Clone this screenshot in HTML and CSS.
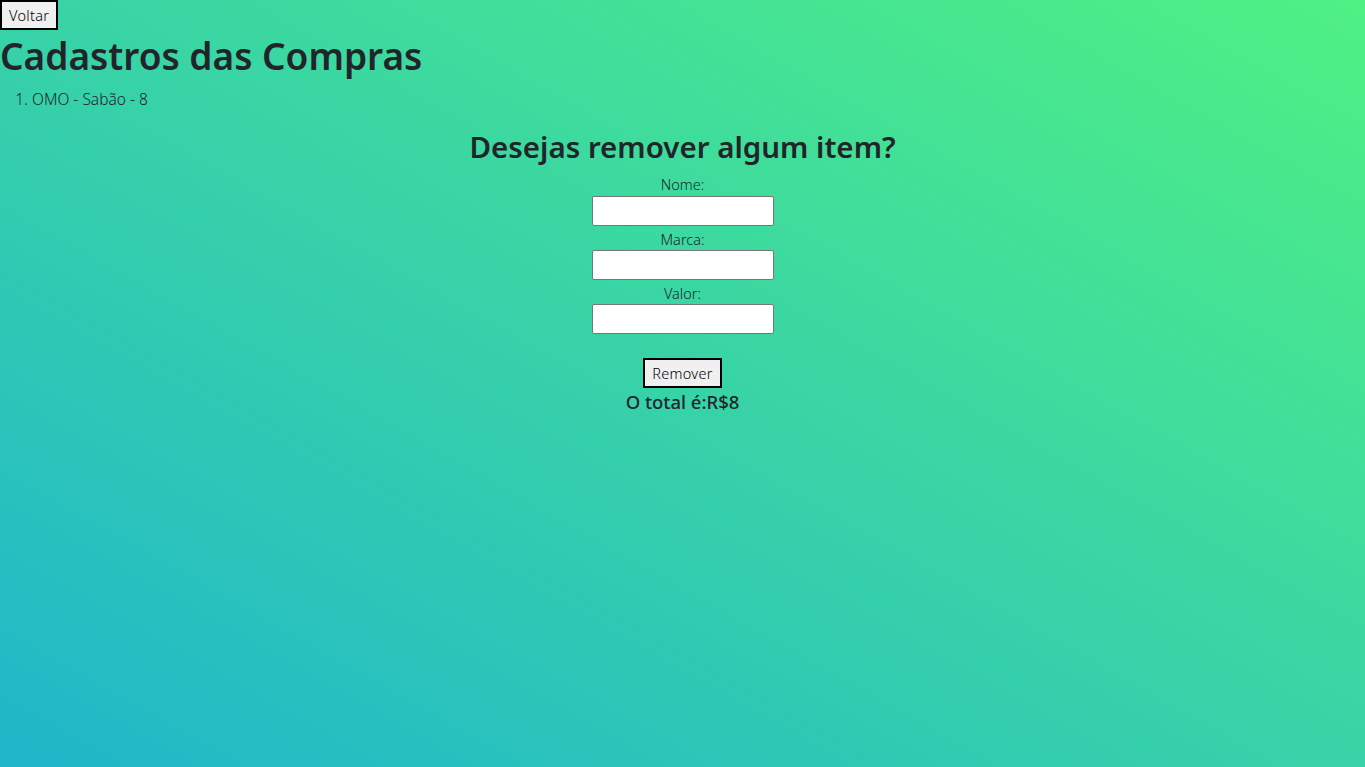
FILE: index.html
```html
<!DOCTYPE html>
<html lang="pt-BR">
<head>
<meta charset="utf-8">
<title>Cadastros das Compras</title>
<link rel="stylesheet" href="styles.css">
</head>
<body>
<button class="btn back">Voltar</button>
<h1 class="title">Cadastros das Compras</h1>
<ol class="list">
  <li>OMO - Sabão - 8</li>
</ol>
<section class="remove">
  <h2 class="subtitle">Desejas remover algum item?</h2>
  <form class="form">
    <label class="label" for="nome">Nome:</label>
    <input class="field" id="nome" type="text">
    <label class="label" for="marca">Marca:</label>
    <input class="field" id="marca" type="text">
    <label class="label" for="valor">Valor:</label>
    <input class="field" id="valor" type="text">
    <button class="btn submit" type="button">Remover</button>
  </form>
  <p class="total">O total é:R$8</p>
</section>
</body>
</html>
```
FILE: styles.css
```css
html, body {
  height: 100%;
}
body {
  margin: 0;
  font-family: "Noto Sans", "Open Sans", sans-serif;
  color: #212529;
  background: linear-gradient(to top right, #20b6ca, #4ff083);
  min-height: 767px;
}
.btn {
  font-family: "Noto Sans", sans-serif;
  font-size: 14.5px;
  font-weight: 300;
  color: #000;
  background: #f0f0f0;
  border: 2px solid #000;
  padding: 0 7px 0 7px;
  height: 30px;
  display: block;
  letter-spacing: 0.3px;
}
.back {
  margin: 0;
}
.title {
  margin: 4px 0 0 0;
  font-size: 37px;
  font-weight: 600;
  line-height: 44px;
}
.list {
  margin: 10px 0 0 0;
  padding-left: 32px;
  font-size: 15.5px;
  font-weight: 300;
  line-height: 22px;
}
.remove {
  display: flex;
  flex-direction: column;
  align-items: center;
}
.subtitle {
  margin: 17px 0 4px 0;
  font-size: 29.5px;
  font-weight: 600;
  line-height: 40px;
}
.form {
  display: flex;
  flex-direction: column;
  align-items: center;
}
.label {
  font-size: 14.5px;
  font-weight: 300;
  line-height: 20px;
  margin-top: 3px;
}
.field {
  width: 182px;
  height: 30px;
  box-sizing: border-box;
  border: 1px solid #767676;
  border-radius: 2px;
  background: #fff;
  margin: 1px 0 0 0;
}
.field:first-of-type {
  margin-top: 2px;
}
.submit {
  margin-top: 24px;
}
.total {
  margin: 3px 0 0 0;
  font-size: 18.5px;
  font-weight: 500;
  line-height: 22px;
}
```
